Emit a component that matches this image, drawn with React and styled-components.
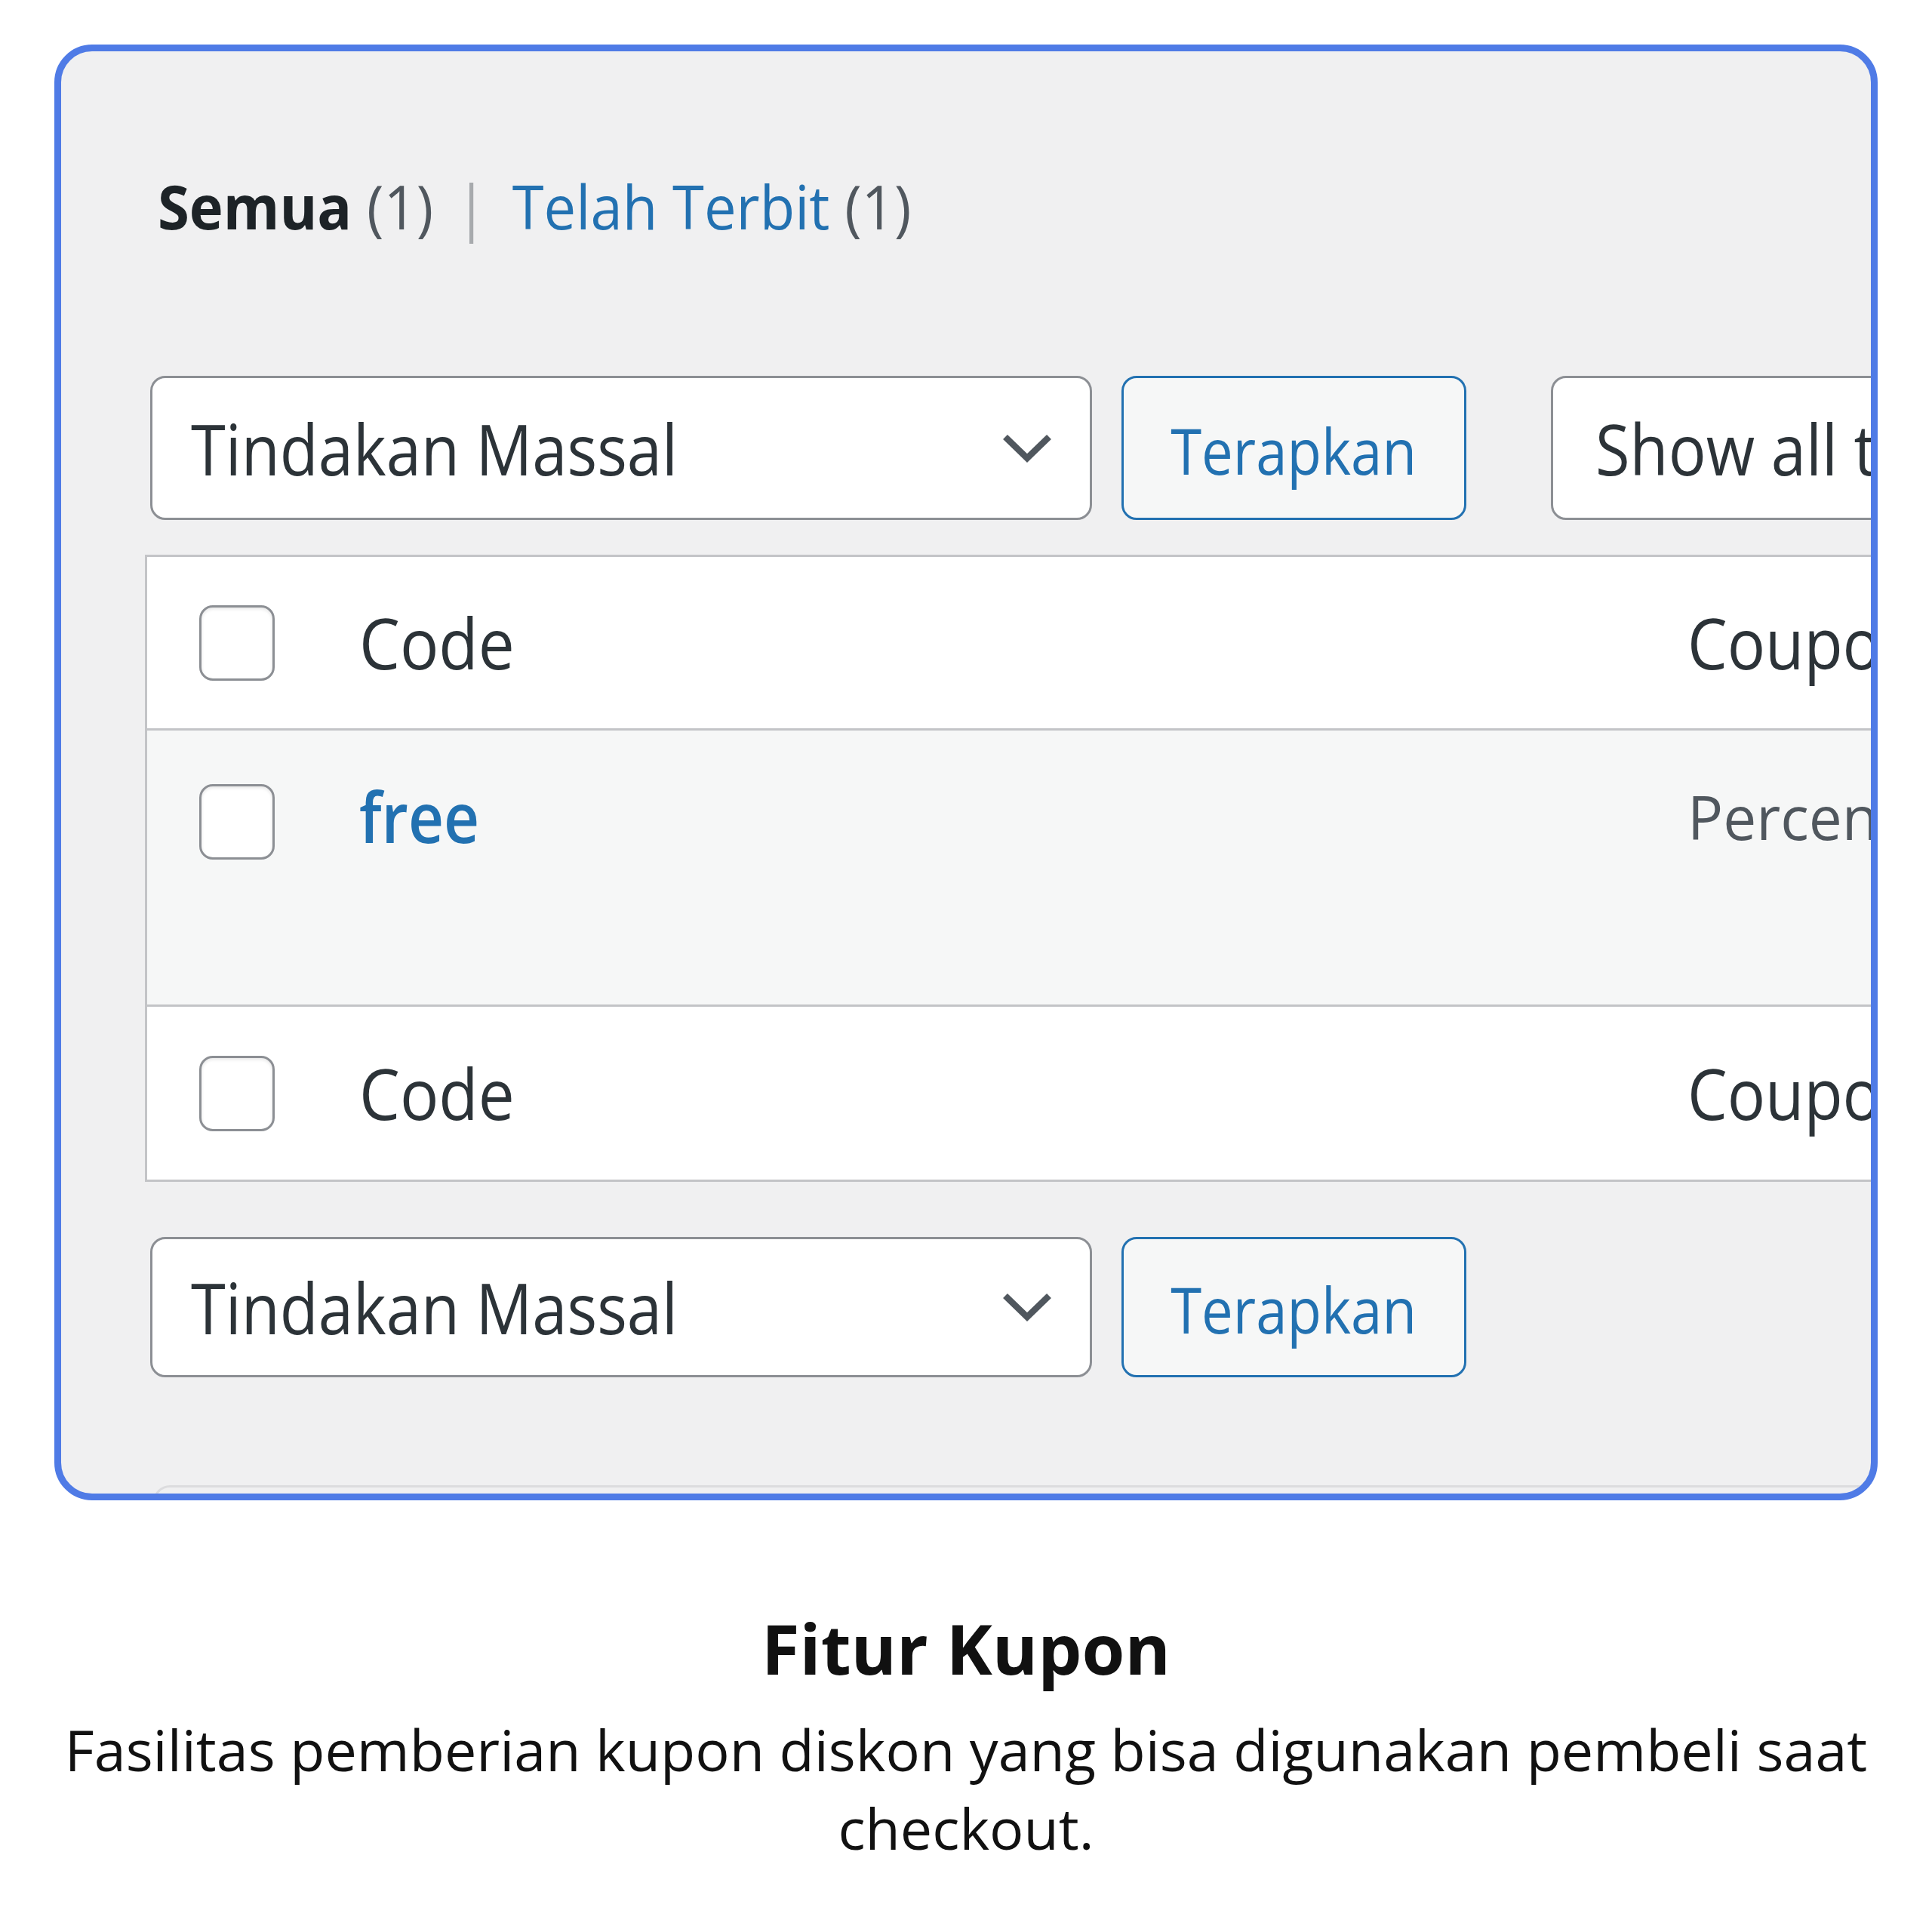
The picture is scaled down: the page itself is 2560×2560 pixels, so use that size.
import React from "react";
import styled, { createGlobalStyle } from "styled-components";

const Global = createGlobalStyle`
  html, body { margin: 0; padding: 0; background: #ffffff; }
  body { width: 2560px; height: 2560px; overflow: hidden; }
  #root { width: 2560px; }
`;

const UI = `"Open Sans", "Noto Sans", sans-serif`;

const Page = styled.div`
  box-sizing: border-box;
  width: 2560px;
  height: 2560px;
  padding-top: 59px;
  display: flex;
  flex-direction: column;
  align-items: center;
  background: #ffffff;
`;

const Frame = styled.div`
  box-sizing: border-box;
  flex-shrink: 0;
  width: 2416px;
  height: 1929px;
  border: 9px solid #4f7be6;
  border-radius: 50px;
  background: #f0f0f1;
  overflow: hidden;
  display: flex;
  flex-direction: column;
  padding-top: 165px;
`;

/* Narrows Open Sans glyphs to the proportions of the original UI face */
const Squeeze = styled.span`
  display: inline-block;
  white-space: nowrap;
  transform: scaleX(${(p) => p.$sx});
  transform-origin: ${(p) => p.$o || "left"} center;
`;

const Views = styled.div`
  flex-shrink: 0;
  display: flex;
  height: 80px;
  padding-left: 128px;
  font-family: ${UI};
  font-size: 80px;
  line-height: 1;
  color: #50575e;
  white-space: pre;
`;

const Current = styled.span`
  font-weight: 700;
  color: #1d2327;
`;

const Sep = styled.span`
  margin: 0 35px 0 31px;
  color: #a7aaad;
`;

const ViewLink = styled.span`
  color: #2271b1;
`;

const Actions = styled.div`
  flex-shrink: 0;
  display: flex;
  height: ${(p) => p.$h}px;
  margin-top: ${(p) => p.$mt}px;
  padding-left: 118px;
`;

const Select = styled.div`
  box-sizing: border-box;
  flex-shrink: 0;
  width: ${(p) => p.$w}px;
  margin-left: ${(p) => p.$ml || 0}px;
  height: 100%;
  border: 3px solid #8c8f94;
  border-radius: 20px;
  background: #ffffff;
  display: flex;
  align-items: center;
  justify-content: space-between;
  padding: 0 49px 0 ${(p) => p.$pl || 51}px;
  font-family: ${UI};
  font-size: 94px;
  line-height: 1;
  color: #2c3338;
  white-space: nowrap;
  overflow: hidden;
`;

const Button = styled.div`
  box-sizing: border-box;
  flex-shrink: 0;
  width: 457px;
  margin-left: 39px;
  height: 100%;
  border: 3px solid #2271b1;
  border-radius: 20px;
  background: #f6f7f7;
  display: flex;
  align-items: center;
  justify-content: center;
  padding-top: 6px;
  font-family: ${UI};
  font-size: 84px;
  line-height: 1;
  color: #2271b1;
`;

const Table = styled.div`
  flex-shrink: 0;
  width: 2600px;
  margin-top: 46px;
  margin-left: 111px;
  border: 3px solid #c3c4c7;
  border-right: none;
  background: #ffffff;
`;

const Row = styled.div`
  display: flex;
  align-items: ${(p) => (p.$top ? "flex-start" : "center")};
  height: ${(p) => p.$h}px;
  background: ${(p) => (p.$alt ? "#f6f7f7" : "#ffffff")};
  border-bottom: ${(p) => (p.$last ? "none" : "3px solid #c3c4c7")};
`;

const CheckCell = styled.div`
  flex-shrink: 0;
  width: 281px;
  box-sizing: border-box;
  padding-left: 69px;
  padding-top: ${(p) => p.$pt || 0}px;
`;

const Checkbox = styled.div`
  box-sizing: border-box;
  width: 100px;
  height: 100px;
  border: 3px solid #8c8f94;
  border-radius: 18px;
  background: #ffffff;
  box-shadow: inset 0 2px 4px rgba(0, 0, 0, 0.1);
`;

const NameCell = styled.div`
  flex-shrink: 0;
  width: 1760px;
  padding-top: ${(p) => p.$pt || 0}px;
  font-family: ${UI};
  font-size: 93px;
  line-height: 1;
  font-weight: ${(p) => (p.$link ? 600 : 400)};
  color: ${(p) => (p.$link ? "#2271b1" : "#2c3338")};
`;

const TypeCell = styled.div`
  flex-shrink: 0;
  padding-top: ${(p) => p.$pt || 0}px;
  font-family: ${UI};
  font-size: ${(p) => (p.$small ? 80 : 93)}px;
  line-height: 1;
  color: ${(p) => (p.$small ? "#50575e" : "#2c3338")};
  white-space: nowrap;
`;

const NextBox = styled.div`
  flex-shrink: 0;
  width: 2600px;
  height: 60px;
  margin-top: 143px;
  margin-left: 122px;
  border-top: 3px solid #dcdcde;
  border-left: 3px solid #dcdcde;
  border-top-left-radius: 22px;
`;

const Caption = styled.div`
  flex-shrink: 0;
  width: 100%;
  margin-top: 150px;
  text-align: center;
  font-family: "Open Sans", "Noto Sans", sans-serif;
  color: #111111;
`;

const Title = styled.div`
  font-size: 92px;
  line-height: 1;
  font-weight: 700;
`;

const Desc = styled.div`
  margin-top: 36px;
  padding: 0 40px;
  font-size: 75.5px;
  line-height: 104px;
  font-weight: 400;
`;

const Chevron = () => (
  <svg width="68" height="40" viewBox="0 0 68 40" fill="none">
    <polyline
      points="5,5 34,33 63,5"
      stroke="#50575e"
      strokeWidth="8.5"
      strokeLinejoin="miter"
    />
  </svg>
);

const BulkActions = ({ h, mt, withFilter }) => (
  <Actions $h={h} $mt={mt}>
    <Select $w={1248}>
      <Squeeze $sx={0.885}>Tindakan Massal</Squeeze>
      <Chevron />
    </Select>
    <Button>
      <Squeeze $sx={0.885} $o="center">
        Terapkan
      </Squeeze>
    </Button>
    {withFilter && (
      <Select $w={900} $ml={112} $pl={56}>
        <Squeeze $sx={0.885}>Show all types</Squeeze>
      </Select>
    )}
  </Actions>
);

export default function App() {
  return (
    <>
      <Global />
      <Page>
        <Frame>
          <Views>
            <Squeeze $sx={0.95}>
              <Current>Semua</Current>
              <span> (1)</span>
              <Sep>|</Sep>
              <ViewLink>Telah Terbit</ViewLink>
              <span> (1)</span>
            </Squeeze>
          </Views>

          <BulkActions h={191} mt={185} withFilter />

          <Table>
            <Row $h={227}>
              <CheckCell>
                <Checkbox />
              </CheckCell>
              <NameCell>
                <Squeeze $sx={0.92}>Code</Squeeze>
              </NameCell>
              <TypeCell>
                <Squeeze $sx={0.9}>Coupon type</Squeeze>
              </TypeCell>
            </Row>
            <Row $h={363} $alt $top>
              <CheckCell $pt={71}>
                <Checkbox />
              </CheckCell>
              <NameCell $link $pt={67}>
                <Squeeze $sx={0.88}>free</Squeeze>
              </NameCell>
              <TypeCell $small $pt={74}>
                <Squeeze $sx={0.98}>Percentage discount</Squeeze>
              </TypeCell>
            </Row>
            <Row $h={229} $last>
              <CheckCell>
                <Checkbox />
              </CheckCell>
              <NameCell>
                <Squeeze $sx={0.92}>Code</Squeeze>
              </NameCell>
              <TypeCell>
                <Squeeze $sx={0.9}>Coupon type</Squeeze>
              </TypeCell>
            </Row>
          </Table>

          <BulkActions h={186} mt={73} />

          <NextBox />
        </Frame>

        <Caption>
          <Title>Fitur Kupon</Title>
          <Desc>
            Fasilitas pemberian kupon diskon yang bisa digunakan pembeli saat
            checkout.
          </Desc>
        </Caption>
      </Page>
    </>
  );
}
